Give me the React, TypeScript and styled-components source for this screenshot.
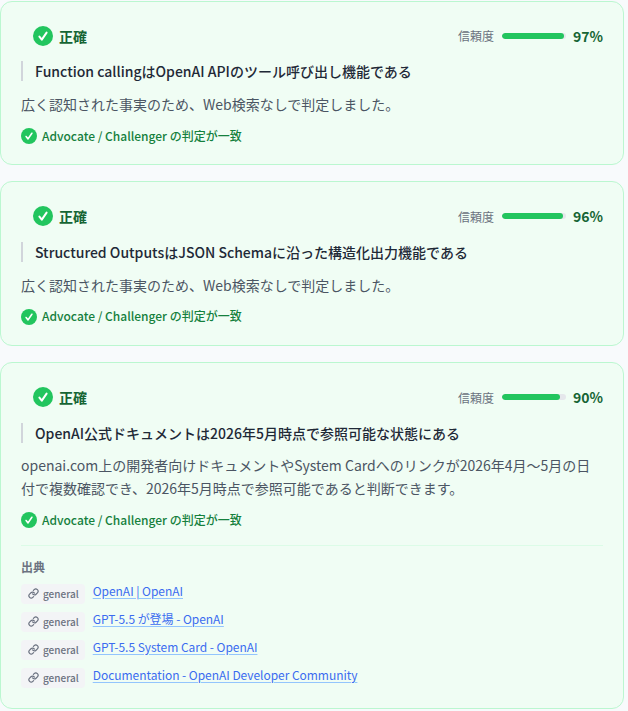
import styled, { createGlobalStyle } from 'styled-components'

const Global = createGlobalStyle`
  html, body {
    margin: 0;
    padding: 0;
    background: #f8fafc;
    font-family: "Noto Sans CJK JP", "Noto Sans", sans-serif;
  }
  * {
    box-sizing: border-box;
  }
`

const Page = styled.div`
  width: 624px;
  height: 711px;
  padding-top: 0.6px;
  display: flex;
  flex-direction: column;
  gap: 16px;
  overflow: hidden;
`

const Card = styled.div`
  background: #f0fdf4;
  border: 1px solid #bbf7d0;
  border-radius: 12px;
  padding: 20px;
  flex-shrink: 0;
`

const Header = styled.div`
  display: flex;
  justify-content: space-between;
  align-items: center;
  height: 28.2px;
  padding-left: 12px;
`

const Verdict = styled.div`
  display: flex;
  align-items: center;
  gap: 6px;
  font-size: 14px;
  font-weight: 700;
  color: #166534;
`

const Confidence = styled.div`
  display: flex;
  align-items: center;
  font-size: 12px;
  color: #6b7280;
`

const Track = styled.div`
  width: 64px;
  height: 6px;
  margin: 0 7px 0 8px;
  border-radius: 3px;
  background: #e5e7eb;
  overflow: hidden;
`

const Fill = styled.div`
  height: 100%;
  background: #22c55e;
  border-radius: 3px;
`

const Percent = styled.span`
  font-size: 14px;
  font-weight: 700;
  color: #166534;
`

const Claim = styled.div`
  margin-top: 11.5px;
  border-left: 2px solid #d1d5db;
  padding-left: 12px;
  font-size: 14px;
  font-weight: 500;
  line-height: 20px;
  color: #1f2937;
`

const Reason = styled.p`
  margin: 11.5px 0 0;
  font-size: 14px;
  line-height: 22.75px;
  color: #4b5563;
`

const Agreement = styled.div`
  margin-top: 12px;
  display: flex;
  align-items: center;
  gap: 5px;
  font-size: 12px;
  font-weight: 500;
  line-height: 16.8px;
  color: #15803d;
`

const Sources = styled.div`
  margin-top: 16px;
  padding-top: 13px;
  border-top: 1px solid #dcfce7;
`

const SourcesTitle = styled.div`
  font-size: 12px;
  font-weight: 700;
  line-height: 16px;
  color: #6b7280;
  margin-bottom: 9px;
`

const SourceList = styled.div`
  display: flex;
  flex-direction: column;
  gap: 8px;
`

const SourceRow = styled.div`
  display: flex;
  align-items: flex-start;
  gap: 8px;
  height: 20px;
`

const Tag = styled.span`
  display: inline-flex;
  align-items: center;
  gap: 4px;
  height: 20px;
  padding: 0 6px 0 7px;
  border-radius: 4px;
  background: #f3f4f6;
  font-size: 10px;
  font-weight: 500;
  color: #6b7280;
`

const SourceLink = styled.a`
  font-size: 12px;
  line-height: 13px;
  letter-spacing: -0.04px;
  color: #3b6cf0;
  text-decoration: underline;
  text-decoration-color: #93c5fd;
  text-underline-offset: 2px;
`

const CheckIcon = ({ size }: { size: number }) => (
  <svg width={size} height={size} viewBox="0 0 20 20">
    <circle cx="10" cy="10" r="10" fill="#22c55e" />
    <path d="M6.4 10.6l2.4 3 4.8-7" fill="none" stroke="#fff" strokeWidth="2" strokeLinecap="round" strokeLinejoin="round" />
  </svg>
)

const LinkIcon = () => (
  <svg width="11" height="11" viewBox="0 0 24 24" fill="none" stroke="#6b7280" strokeWidth="2.6" strokeLinecap="round" strokeLinejoin="round">
    <path d="M10 13a5 5 0 0 0 7.54.54l3-3a5 5 0 0 0-7.07-7.07l-1.72 1.71" />
    <path d="M14 11a5 5 0 0 0-7.54-.54l-3 3a5 5 0 0 0 7.07 7.07l1.71-1.71" />
  </svg>
)

type Item = {
  claim: string
  percent: number
  reason: string
  sources?: string[]
}

const items: Item[] = [
  {
    claim: 'Function callingはOpenAI APIのツール呼び出し機能である',
    percent: 97,
    reason: '広く認知された事実のため、Web検索なしで判定しました。',
  },
  {
    claim: 'Structured OutputsはJSON Schemaに沿った構造化出力機能である',
    percent: 96,
    reason: '広く認知された事実のため、Web検索なしで判定しました。',
  },
  {
    claim: 'OpenAI公式ドキュメントは2026年5月時点で参照可能な状態にある',
    percent: 90,
    reason:
      'openai.com上の開発者向けドキュメントやSystem Cardへのリンクが2026年4月〜5月の日付で複数確認でき、2026年5月時点で参照可能であると判断できます。',
    sources: [
      'OpenAI | OpenAI',
      'GPT-5.5 が登場 - OpenAI',
      'GPT-5.5 System Card - OpenAI',
      'Documentation - OpenAI Developer Community',
    ],
  },
]

export default function App() {
  return (
    <>
      <Global />
      <Page>
        {items.map((item) => (
          <Card key={item.claim}>
            <Header>
              <Verdict>
                <CheckIcon size={20} />
                正確
              </Verdict>
              <Confidence>
                信頼度
                <Track>
                  <Fill style={{ width: `${item.percent}%` }} />
                </Track>
                <Percent>{item.percent}%</Percent>
              </Confidence>
            </Header>
            <Claim>{item.claim}</Claim>
            <Reason>{item.reason}</Reason>
            <Agreement>
              <CheckIcon size={16} />
              Advocate / Challenger の判定が一致
            </Agreement>
            {item.sources && (
              <Sources>
                <SourcesTitle>出典</SourcesTitle>
                <SourceList>
                  {item.sources.map((source) => (
                    <SourceRow key={source}>
                      <Tag>
                        <LinkIcon />
                        general
                      </Tag>
                      <SourceLink href="#">{source}</SourceLink>
                    </SourceRow>
                  ))}
                </SourceList>
              </Sources>
            )}
          </Card>
        ))}
      </Page>
    </>
  )
}
